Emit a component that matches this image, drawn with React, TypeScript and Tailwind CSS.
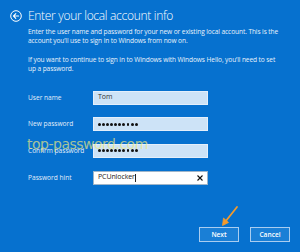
import React from "react";

function BackIcon() {
  return (
    <svg width="12" height="12" viewBox="0 0 12 12" fill="none">
      <circle cx="6" cy="6" r="5.3" stroke="white" strokeWidth="1" />
      <path d="M8.6 6H3.6M5.8 3.7L3.5 6l2.3 2.3" stroke="white" strokeWidth="1.1" strokeLinecap="round" strokeLinejoin="round" />
    </svg>
  );
}

function Dots() {
  return (
    <div className="flex gap-[1.2px] items-center">
      {Array.from({ length: 10 }).map((_, i) => (
        <span key={i} className="block w-[2.9px] h-[2.9px] rounded-full bg-[#111]" />
      ))}
    </div>
  );
}

export default function App() {
  const font = "font-['Open_Sans','Noto_Sans',sans-serif]";
  return (
    <div className={`relative w-[300px] h-[252px] overflow-hidden bg-[#0671cf] text-white ${font}`}>
      <div className="flex items-center pl-[10px] pt-[9px]">
        <BackIcon />
        <div className="ml-[6px] text-[12px] leading-[14px] font-light text-white tracking-[-0.3px]">
          Enter your local account info
        </div>
      </div>
      <div className="pl-[28px] pr-[20px] mt-[4px] text-[6.6px] leading-[9.4px] text-[#e8f1fb] tracking-[-0.1px]">
        <p>
          Enter the user name and password for your new or existing local account. This is the account you’ll use to sign in to Windows from now on.
        </p>
        <p className="mt-[9px]">
          If you want to continue to sign in to Windows with Windows Hello, you’ll need to set up a password.
        </p>
      </div>
      <div className="grid grid-cols-[65px_115px] gap-y-[12.66px] pl-[28px] mt-[17px] text-[6.6px] text-[#e3eefa]">
        <div className="flex items-center h-[14px]">User name</div>
        <div className="h-[14px] bg-[#cde3f7] border border-[#e4effb] flex items-center px-[4px] text-[#333] text-[7px]">Tom</div>
        <div className="flex items-center h-[14px]">New password</div>
        <div className="h-[14px] bg-[#cde3f7] border border-[#e4effb] flex items-center px-[4px]"><Dots /></div>
        <div className="flex items-center h-[14px]">Confirm password</div>
        <div className="h-[14px] bg-[#cde3f7] border border-[#e4effb] flex items-center px-[4px]"><Dots /></div>
        <div className="flex items-center h-[14px]">Password hint</div>
        <div className="h-[14px] bg-white border border-[#9fb5c9] flex items-center pl-[4px] pr-[4px] text-[#222] text-[7px] tracking-[-0.1px]">
          <span>PCUnlocker</span>
          <span className="block w-[0.8px] h-[8px] bg-[#222]" />
          <span className="flex-1" />
          <svg width="6" height="6" viewBox="0 0 6 6">
            <path d="M0.5 0.5L5.5 5.5M5.5 0.5L0.5 5.5" stroke="#111" strokeWidth="1.1" />
          </svg>
        </div>
      </div>
      <div className="absolute left-0 right-0 bottom-[10px] flex justify-end gap-[11px] pr-[10px]">
        <button className="w-[40px] h-[15px] bg-[#1a7fd6] border border-[#a9cdf0] text-[6.6px] font-semibold text-white flex items-center justify-center">Next</button>
        <button className="w-[40px] h-[15px] bg-[#1a7fd6] border border-[#a9cdf0] text-[6.6px] font-semibold text-white flex items-center justify-center">Cancel</button>
      </div>
      <div className="absolute left-[27px] top-[134px] text-[14px] font-['DejaVu_Sans',sans-serif] text-[rgba(238,232,130,0.7)] tracking-[-0.5px] pointer-events-none">
        top-password.com
      </div>
      <svg className="absolute left-0 top-0" width="300" height="252" viewBox="0 0 300 252">
        <path d="M237 207L225.5 221.5" stroke="#f39a2c" strokeWidth="1.8" strokeLinecap="round" />
        <path d="M222.5 225.5L223.5 218L228.5 222.5Z" fill="#f39a2c" stroke="#f39a2c" strokeWidth="0.8" strokeLinejoin="round" />
      </svg>
    </div>
  );
}
